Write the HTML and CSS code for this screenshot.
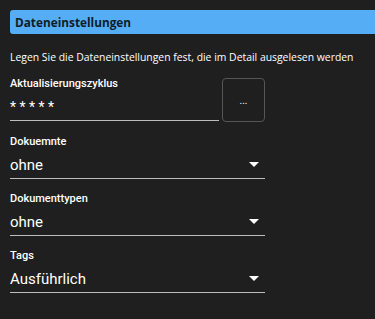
FILE: index.html
```
<!DOCTYPE html>
<html lang="de">
<head>
    <meta charset="UTF-8">
    <meta name="viewport" content="width=device-width, initial-scale=1.0">
    <title>Dateneinstellungen</title>
    <link rel="stylesheet" href="styles.css">
</head>
<body>
    <div class="settings">
        <h2 class="section-title">Dateneinstellungen</h2>
        <p class="section-desc">Legen Sie die Dateneinstellungen fest, die im Detail ausgelesen werden</p>

        <div class="form">
            <div class="field-row">
                <div class="field field-grow">
                    <label class="field-label">Aktualisierungszyklus</label>
                    <div class="field-input">
                        <span class="field-value">* * * * *</span>
                    </div>
                </div>
                <button class="more-btn">...</button>
            </div>

            <div class="field">
                <label class="field-label">Dokuemnte</label>
                <div class="field-input">
                    <span class="field-value">ohne</span>
                    <span class="caret"></span>
                </div>
            </div>

            <div class="field">
                <label class="field-label">Dokumenttypen</label>
                <div class="field-input">
                    <span class="field-value">ohne</span>
                    <span class="caret"></span>
                </div>
            </div>

            <div class="field">
                <label class="field-label">Tags</label>
                <div class="field-input">
                    <span class="field-value">Ausführlich</span>
                    <span class="caret"></span>
                </div>
            </div>
        </div>
    </div>
</body>
</html>
```

FILE: styles.css
```
* {
    margin: 0;
    padding: 0;
    box-sizing: border-box;
}

body {
    background-color: #1f1f1f;
    color: #fff;
    font-family: Roboto, "Noto Sans", sans-serif;
}

.settings {
    padding: 10px 0 0 10px;
}

.section-title {
    background-color: #55adf5;
    color: #0f1c2a;
    height: 24px;
    line-height: 24px;
    padding-left: 5px;
    border-radius: 3px 0 0 3px;
    font-family: "Open Sans", sans-serif;
    font-size: 11.8px;
    font-weight: 700;
}

.section-desc {
    margin-top: 16px;
    font-family: "Open Sans", sans-serif;
    font-size: 10.4px;
    line-height: 14px;
    color: #fff;
}

.form {
    width: 255px;
    margin-top: 13px;
    display: flex;
    flex-direction: column;
    gap: 13px;
}

.field-row {
    display: flex;
    gap: 3px;
    align-items: flex-start;
}

.field-grow {
    flex: 1;
}

.field-label {
    display: block;
    font-size: 11px;
    font-weight: 500;
    line-height: 14px;
    margin-bottom: 2px;
}

.field-input {
    height: 28px;
    border-bottom: 1px solid #bdbdbd;
    display: flex;
    align-items: center;
    justify-content: space-between;
}

.field-value {
    font-size: 15px;
    line-height: 20px;
}

.field-row .field-value {
    font-size: 14px;
}

.caret {
    width: 0;
    height: 0;
    border-left: 5px solid transparent;
    border-right: 5px solid transparent;
    border-top: 5px solid #fff;
    margin-right: 6px;
}

.more-btn {
    width: 43px;
    height: 44px;
    margin-top: 1px;
    background: transparent;
    border: 1px solid #555;
    border-radius: 4px;
    color: #fff;
    font-size: 10px;
    font-family: Roboto, sans-serif;
}
```
